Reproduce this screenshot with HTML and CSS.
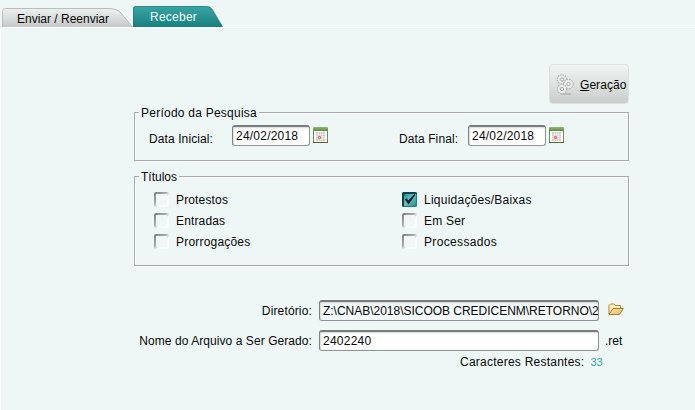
FILE: index.html
```html
<!DOCTYPE html>
<html lang="pt-BR">
<head>
<meta charset="utf-8">
<title>Receber</title>
<link rel="stylesheet" href="styles.css">
</head>
<body>
<svg width="0" height="0" class="defs">
  <defs>
    <linearGradient id="gray" x2="0" y2="1"><stop stop-color="#edf1f0"/><stop offset="1" stop-color="#c5c9c8"/></linearGradient>
    <linearGradient id="teal" x2="0" y2="1"><stop stop-color="#3aa5a4"/><stop offset="1" stop-color="#16817f"/></linearGradient>
    <linearGradient id="gold" x2="1" y2="1"><stop stop-color="#fff0b5"/><stop offset="1" stop-color="#eab060"/></linearGradient>
    <linearGradient id="green" x2="0" y2="1"><stop stop-color="#8fba72"/><stop offset="1" stop-color="#5d8b40"/></linearGradient>
    <g id="gear"><circle r="4.7" fill="#e6e8e7" stroke="#b5b7b6" stroke-width="1.2" stroke-dasharray="1.6 .86"/><circle r="3.8" fill="#e9ebea"/><circle r="1.6" fill="#fafafa" stroke="#a9abaa" stroke-width="1"/></g>
    <symbol id="calendar" viewBox="0 0 15 16">
      <path d="M.5 1.500v14h14v-14z" fill="#fff" stroke="#71894f"/><path d="M0 15.500h15" stroke="#4d662d"/>
      <rect width="15" height="4" rx="1" fill="url(#green)"/>
      <path d="M3 5h9v9H3z" fill="#cfcfcf"/><path d="M3 7.500h9M3 9.500h9M3 11.500h9M5.500 5v9M7.500 5v9M9.500 5v9" stroke="#f3f3f3" stroke-width=".6"/>
      <path d="M5.500 9.500h2v2h-2z" fill="#fff" stroke="#d9694a"/>
    </symbol>
  </defs>
</svg>
<nav class="tabs">
  <div class="tab send"><svg width="133" height="19"><path d="M.5 19V3.5Q.5.5 3.5.5H107Q115 .5 119 5L130.500 19" fill="url(#gray)" stroke="#b9bdbc"/></svg><span>Enviar / Reenviar</span></div>
  <div class="tab receive"><svg width="90" height="21"><path d="M0 21V3Q0 0 3 0H73Q77 0 79 3L90 21z" fill="url(#teal)"/><path d="M.5 21V3Q.5.5 3 .5H73Q77 .5 79 3L89.500 21" fill="none" stroke="#23807e" stroke-opacity=".7"/></svg><span>Receber</span></div>
</nav>
<main class="panel">
  <button class="generate"><svg width="18" height="21"><path d="M5 20h10" stroke="#b9bcbb" stroke-width="2"/><use href="#gear" x="6" y="5.500"/><use href="#gear" x="12.500" y="10"/><use href="#gear" x="6" y="15"/></svg><span><u>G</u>eração</span></button>
  <section class="group period">
    <h2 class="s25">Período da Pesquisa</h2>
    <div class="date"><label class="s10">Data Inicial:</label><div class="field">24/02/2018</div><svg class="cal"><use href="#calendar"/></svg></div>
    <div class="date"><label class="s10">Data Final:</label><div class="field">24/02/2018</div><svg class="cal"><use href="#calendar"/></svg></div>
  </section>
  <section class="group titles">
    <h2>Títulos</h2>
    <div class="option"><i class="check"></i><span class="s15">Protestos</span></div>
    <div class="option"><i class="check on"><svg width="15" height="15"><path d="M3 7.500L4.800 6.200L6.300 8.500L12.500 2L13.300 3L6.500 12.500z" fill="#062022"/></svg></i><span class="s25">Liquidações/Baixas</span></div>
    <div class="option"><i class="check"></i><span class="s15">Entradas</span></div>
    <div class="option"><i class="check"></i><span class="s20">Em Ser</span></div>
    <div class="option"><i class="check"></i><span class="s20">Prorrogações</span></div>
    <div class="option"><i class="check"></i><span class="s35">Processados</span></div>
  </section>
  <div class="row directory"><label class="s15">Diretório:</label><div class="field readonly">Z:\CNAB\2018\SICOOB CREDICENM\RETORNO\2</div>
    <svg class="folder" width="16" height="13"><path d="M1 11V2.500L2.500 1H6L7.500 2.500H12.500V5" fill="#fff0bd" stroke="#bd8138"/><path d="M1 11.500L5 5.500H15.300L11.500 11.500z" fill="url(#gold)" stroke="#b87527"/></svg>
  </div>
  <div class="row filename"><label class="s05">Nome do Arquivo a Ser Gerado:</label><div class="field">2402240</div><span class="ext">.ret</span></div>
  <div class="remaining"><span class="s25">Caracteres Restantes:</span><b>33</b></div>
</main>
</body>
</html>
```
FILE: styles.css
```css
* { box-sizing: border-box; }
body { margin: 0; height: 410px; overflow: hidden; background: #eef7f6; color: #080808; font: 12px/14px "Liberation Sans", Arial, sans-serif; }
.defs { position: absolute; }
svg { display: block; flex: none; }
.tabs { display: flex; align-items: flex-end; height: 27px; padding-left: 2px; }
.tab { display: grid; white-space: nowrap; }
.tab > * { grid-area: 1 / 1; }
.send { width: 131px; }
.send span { padding: 4px 0 0 15px; }
.receive { color: #f2ffff; }
.receive span { padding: 4px 0 0 17px; letter-spacing: .25px; }
.panel { height: 383px; border-top: 1px solid #fff; border-left: 1px solid #fff; padding: 36px 66px 0 133px; }
.generate { display: flex; align-items: center; gap: 6px; width: 80px; height: 40px; margin: 0 0 8px auto; padding: 1px 0 0 6px; border: 1px solid #dce1df; border-radius: 4px; background: linear-gradient(#f0f4f3, #c9cecc); color: #080808; font: inherit; letter-spacing: .05px; }
.generate u { text-underline-offset: 1px; }
.group { border: 1px solid #a5abaa; box-shadow: inset 1px 1px #fff, 1px 1px #fff; }
h2 { width: max-content; height: 14px; margin: -7px 0 0 4px; padding: 0 2px; background: #eef7f6; font: inherit; }
.period { display: grid; grid-template-columns: 250px 1fr; grid-template-rows: 12px 21px; height: 49px; }
.period h2 { grid-column: 1 / 3; }
.date { display: flex; align-items: center; padding-left: 14px; }
.date label { width: 83px; padding-top: 6px; }
.date + .date label { width: 69px; }
.field { height: 21px; border: 1px solid #8e9492; border-top: 2px solid #777d7b; border-left-color: #7d8381; border-radius: 3px; background: #fff; box-shadow: inset 1px 1px 2px #d4d8d7; padding: 2px 3px; overflow: hidden; white-space: nowrap; }
.date .field { width: 78px; letter-spacing: .22px; }
.cal { width: 15px; height: 16px; margin: -2px 0 0 3px; }
.titles { display: grid; grid-template-columns: 248px 1fr; grid-template-rows: 12px 21px 21px 21px; height: 90px; margin-top: 15px; }
.titles h2 { grid-column: 1 / 3; }
.option { display: flex; align-items: center; gap: 7px; padding-left: 19px; }
.check { width: 15px; height: 15px; border-radius: 2px; background: linear-gradient(#f0f7f6, #f0f7f6) 2px 2px / 11px 11px no-repeat, linear-gradient(135deg, #777b7a, #a9adac 42%, #f7fbfa 60%, #fafdfd); }
.check.on { background: linear-gradient(135deg, #187478, #69c0bf 50%, #158987); box-shadow: inset 2px 2px #07474b, inset -1px -1px #19807f; }
.row { display: flex; align-items: center; height: 21px; }
.row label { width: 185px; padding-right: 7px; text-align: right; white-space: nowrap; }
.row .field { width: 280px; }
.directory { margin-top: 34px; }
.directory .readonly { background: #f3f9f8; letter-spacing: -.02px; }
.folder { margin: -3px 0 0 9px; }
.filename { margin-top: 9px; }
.filename .field { letter-spacing: .25px; }
.ext { margin-left: 6px; }
.remaining { display: flex; gap: 6px; margin: 4px 0 0 326px; white-space: nowrap; }
.remaining b { color: #31a49e; font-weight: normal; font-size: 11px; }
.s05 { letter-spacing: .07px; }
.s10 { letter-spacing: .1px; }
.s15 { letter-spacing: .15px; }
.s20 { letter-spacing: .2px; }
.s25 { letter-spacing: .24px; }
.s35 { letter-spacing: .35px; }
```
